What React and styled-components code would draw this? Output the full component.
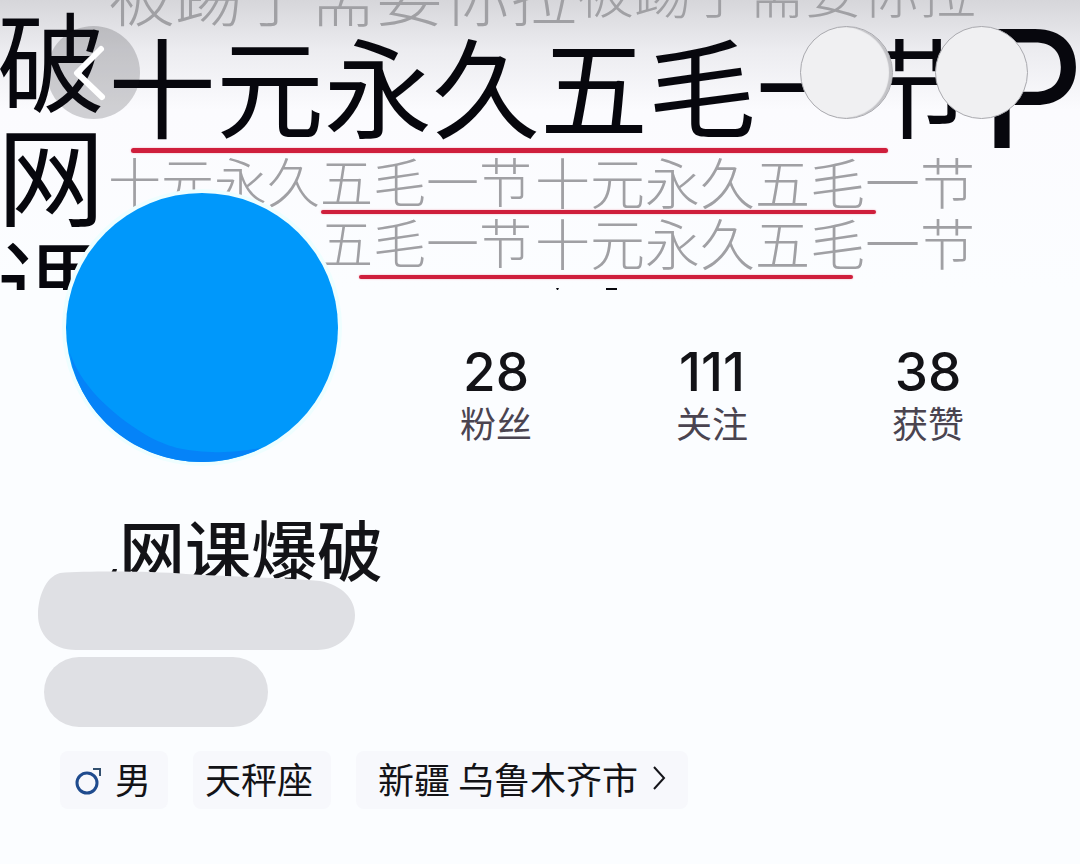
import React from "react";
import styled, { createGlobalStyle } from "styled-components";

const Global = createGlobalStyle`
  * { box-sizing: border-box; }
  body {
    margin: 0;
    background: #fbfdff;
    color: #131317;
    font-family: "Noto Sans CJK SC", sans-serif;
  }
  button { font: inherit; color: inherit; border: 0; padding: 0; cursor: pointer; }
`;

const Page = styled.main`
  position: relative;
  min-height: 100vh;
  overflow: hidden;
`;

const Cover = styled.section`
  display: flex;
  height: 290px;
  overflow: hidden;
  white-space: nowrap;
  background: linear-gradient(#d6d6da 0, #ececf0 50px, #fbfbfe 110px, #fbfdff 290px);
`;

const SideText = styled.div`
  flex: none;
  width: 111px;
  margin-top: -114px;
  margin-left: -3px;
  font-size: 108px;
  line-height: 114px;
  color: #07070d;
`;

const SideChar = styled.span`
  display: block;
`;

const CoverBody = styled.div`
  flex: 1;
  min-width: 0;
`;

const FaintRow = styled.div`
  display: flex;
  align-items: flex-end;
  gap: ${(p) => p.$gap || 0}px;
  height: ${(p) => p.$height}px;
  margin-left: ${(p) => p.$indent || 0}px;
  color: #a0a0a4;
  font-weight: 300;
`;

const Faint = styled.span`
  font-size: ${(p) => p.$size}px;
  line-height: ${(p) => p.$line}px;
`;

const Headline = styled.h2`
  display: flex;
  align-items: flex-end;
  gap: 8px;
  height: 120px;
  margin: 0;
  font-size: 108px;
  line-height: 130px;
  font-weight: 400;
  color: #07070d;
`;

const BigLetter = styled.span`
  font-family: Inter, sans-serif;
  font-size: 164px;
  line-height: 118px;
`;

const Rule = styled.div`
  width: ${(p) => p.$width}px;
  height: ${(p) => p.$thick}px;
  margin: ${(p) => p.$top}px 0 0 ${(p) => p.$indent}px;
  border-radius: 3px;
  background: #cf1f3c;
  box-shadow: 0 0 2px #f0a0b0;
`;

const Specks = styled.svg`
  display: block;
  margin: 9px 0 0 444px;
`;

const TopBar = styled.header`
  position: absolute;
  inset: 26px 52px auto 47px;
  display: flex;
  align-items: center;
  gap: 42px;
`;

const RoundButton = styled.button`
  width: 93px;
  height: 93px;
  border-radius: 50%;
  background: #f0f0f2;
  border: 1px solid #a9a9ae;
  box-shadow: ${(p) => (p.$shaded ? "inset -3px 0 1px #c2c2c6" : "none")};
`;

const BackButton = styled(RoundButton)`
  margin-right: auto;
  background: rgba(20, 20, 26, 0.19);
  border: 0;
  svg { display: block; }
`;

const Summary = styled.section`
  display: flex;
  align-items: flex-start;
  gap: 50px;
  padding: 0 44px 0 66px;
`;

const Avatar = styled.div`
  flex: none;
  width: 272px;
  height: 269px;
  margin-top: -97px;
  border-radius: 50%;
  background: #0098fb;
  box-shadow: 0 0 0 4px #eefeff;
  position: relative;
  svg { display: block; }
`;

const Stats = styled.dl`
  flex: 1;
  display: grid;
  grid-template-columns: repeat(3, 1fr);
  margin: 54px 0 0;
  text-align: center;
`;

const Stat = styled.div`
  display: flex;
  flex-direction: column-reverse;
`;

const StatValue = styled.dd`
  margin: 0;
  font-family: Inter, sans-serif;
  font-size: 53px;
  line-height: 56px;
  font-weight: 500;
`;

const StatLabel = styled.dt`
  font-size: 36px;
  line-height: 44px;
  font-weight: 400;
  color: #4a4450;
`;

const Name = styled.h1`
  margin: 47px 0 0 119px;
  font-size: 66px;
  line-height: 76px;
  font-weight: 500;
`;

const Hidden = styled.div`
  margin-top: -16px;
  padding-left: 38px;
  position: relative;
  svg { display: block; }
`;

const HiddenPill = styled.div`
  width: 224px;
  height: 70px;
  margin: 7px 0 0 6px;
  border-radius: 35px;
  background: #dfe0e4;
`;

const Tags = styled.ul`
  display: flex;
  gap: 25px;
  margin: 24px 0 0;
  padding: 0 60px;
  list-style: none;
`;

const Tag = styled.li`
  display: flex;
  align-items: center;
  gap: 12px;
  height: 58px;
  padding: 0 ${(p) => p.$right}px 0 ${(p) => p.$left}px;
  border-radius: 8px;
  background: #f7f8fc;
  font-size: 36px;
  line-height: 54px;
`;

const TagButton = styled.button`
  display: flex;
  align-items: center;
  gap: 14px;
  height: 54px;
  margin-bottom: 4px;
  background: none;
`;

const TagText = styled.span`
  padding-bottom: 4px;
`;

const GenderIcon = () => (
  <svg width="28" height="32" viewBox="0 0 28 32" fill="none" aria-hidden="true">
    <circle cx="12" cy="19" r="10" stroke="#1f4b8e" strokeWidth="3" />
    <path d="M18 5h7v7" stroke="#33506f" strokeWidth="2" />
  </svg>
);

const stats = [
  ["28", "粉丝"],
  ["111", "关注"],
  ["38", "获赞"],
];

export default function App() {
  return (
    <Page>
      <Global />
      <Cover>
        <SideText>
          {["爆", "破", "网", "课"].map((c) => <SideChar key={c}>{c}</SideChar>)}
        </SideText>
        <CoverBody>
          <FaintRow $height={28}>
            <Faint $size={67} $line={72}>被踢了需要你拉</Faint>
            <Faint $size={57} $line={80}>被踢了需要你拉</Faint>
          </FaintRow>
          <Headline>
            <span>十元永久五毛一节</span>
            <BigLetter>P</BigLetter>
          </Headline>
          <Rule $width={757} $thick={5} $top={0} $indent={23} />
          <FaintRow $height={56} $gap={3}>
            <Faint $size={53} $line={58}>十元永久五毛一节</Faint>
            <Faint $size={55} $line={58}>十元永久五毛一节</Faint>
          </FaintRow>
          <Rule $width={555} $thick={4} $top={1} $indent={213} />
          <FaintRow $height={56} $gap={3} $indent={212}>
            <Faint $size={53} $line={58}>五毛一节</Faint>
            <Faint $size={55} $line={58}>十元永久五毛一节</Faint>
          </FaintRow>
          <Rule $width={494} $thick={4} $top={5} $indent={251} />
          <Specks width="72" height="3" viewBox="0 0 72 3" aria-hidden="true">
            <path d="M4 0h3l-1 2H5zM54 0h11v2H54z" fill="#07070d" />
          </Specks>
        </CoverBody>
      </Cover>

      <TopBar>
        <BackButton aria-label="返回">
          <svg width="93" height="93" viewBox="0 0 93 93" fill="none" aria-hidden="true">
            <path d="M54 23 30 47l25 24" stroke="#fff" strokeWidth="6" strokeLinecap="round" strokeLinejoin="round" />
          </svg>
        </BackButton>
        <RoundButton $shaded aria-label="搜索" />
        <RoundButton aria-label="更多" />
      </TopBar>

      <Summary>
        <Avatar>
          <svg width="272" height="269" viewBox="0 0 272 269" aria-hidden="true">
            <path d="M4 160C14 190 42 219 80 242c22 12 37 16 66 17 18 1 38-2 49-4-18 9-39 14-59 14C71 269 14 224 4 160Z" fill="#0583f8" />
          </svg>
        </Avatar>
        <Stats>
          {stats.map(([value, label]) => (
            <Stat key={label}>
              <StatLabel>{label}</StatLabel>
              <StatValue>{value}</StatValue>
            </Stat>
          ))}
        </Stats>
      </Summary>

      <Name>网课爆破</Name>
      <Hidden>
        <svg width="318" height="81" viewBox="0 0 318 81" aria-hidden="true">
          <path d="m73 4 2-4h4l-1 4Z" fill="#131317" />
          <path d="M22 4C50 2 110 2 148 5c50 3 110 4 134 7 22 4 35 18 35 34 0 19-16 35-38 35H38C14 81 0 65 0 46 0 29 7 8 22 4Z" fill="#dfe0e4" />
        </svg>
        <HiddenPill />
      </Hidden>

      <Tags>
        <Tag $left={15} $right={17}>
          <GenderIcon />
          <TagText>男</TagText>
        </Tag>
        <Tag $left={12} $right={18}>
          <TagText>天秤座</TagText>
        </Tag>
        <Tag $left={22} $right={22}>
          <TagButton>
            新疆 乌鲁木齐市
            <svg width="14" height="26" viewBox="0 0 14 26" fill="none" aria-hidden="true">
              <path d="m2 2 10 11L2 24" stroke="#15151a" strokeWidth="2" />
            </svg>
          </TagButton>
        </Tag>
      </Tags>
    </Page>
  );
}
